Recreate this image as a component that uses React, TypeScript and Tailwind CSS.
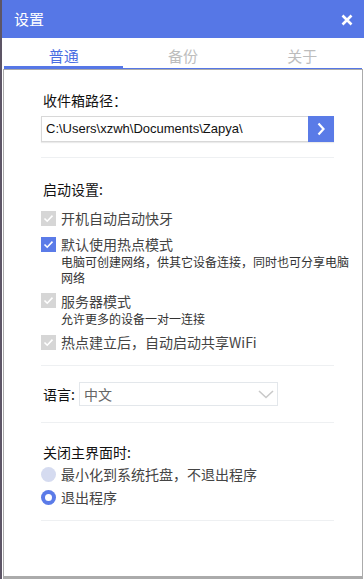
import React from 'react'

const cjk = { fontFamily: '"Noto Sans CJK SC", "Noto Sans", sans-serif' }

function Check({ on, disabled }: { on?: boolean; disabled?: boolean }) {
  return (
    <span
      className={`flex h-[15px] w-[15px] shrink-0 items-center justify-center ${
        disabled ? 'bg-[#d6d6d6]' : on ? 'bg-[#5b7be8]' : 'bg-white border border-gray-300'
      }`}
    >
      <svg width="15" height="15" viewBox="0 0 15 15">
        <polyline points="3.5,7.5 6.2,10.2 11.5,4.6" fill="none" stroke="#fff" strokeWidth="1.6" />
      </svg>
    </span>
  )
}

function Radio({ on }: { on?: boolean }) {
  return on ? (
    <span className="flex h-[15px] w-[15px] shrink-0 items-center justify-center rounded-full bg-[#5b7be8]">
      <span className="h-[7px] w-[7px] rounded-full bg-white" />
    </span>
  ) : (
    <span className="h-[15px] w-[15px] shrink-0 rounded-full bg-[#d5dbf0]" />
  )
}

const Sep = () => <div className="h-px bg-[#eef0f2]" />

export default function App() {
  const tabs = ['普通', '备份', '关于']

  return (
    <div className="flex h-[579px] w-[364px] flex-col bg-white border-l-2 border-[#5d5566]" style={cjk}>
      {/* title bar */}
      <div className="flex h-[38px] shrink-0 items-center justify-between bg-[#5677e6] pl-[12px] pr-[11px]">
        <span className="text-[15px] leading-[20px] text-white">设置</span>
        <svg width="12" height="12" viewBox="0 0 12 12" className="mt-[2px]">
          <path d="M1.5 1.5 L10.5 10.5 M10.5 1.5 L1.5 10.5" stroke="#fff" strokeWidth="2.6" />
        </svg>
      </div>

      {/* tabs */}
      <div className="mx-[2px] flex h-[31px] shrink-0">
        {tabs.map((t, i) => (
          <div key={t} className="flex flex-1 flex-col">
            <div
              className={`flex-1 pt-[8px] text-center text-[15px] leading-[20px] ${
                i === 0 ? 'text-[#4a6ee2]' : 'text-[#bdbdbd]'
              }`}
            >
              {t}
            </div>
            <div className={i === 0 ? 'h-[4px] bg-[#5677e6]' : 'h-px bg-[#5677e6]'} />
          </div>
        ))}
      </div>

      {/* content */}
      <div className="mx-[1px] flex-1 border border-b-[3px] border-[#ababab] pl-[37px] pr-[28px] pt-[20px]">
        <div className="ml-[2px] text-[14px] leading-[20px] text-[#111]">收件箱路径：</div>
        <div className="mt-[6px] flex h-[26px] border border-[#d8d8d8] shadow-[0_1px_1px_rgba(0,0,0,0.08)]">
          <div
            className="flex flex-1 items-center pl-[4px] text-[13px] text-[#111]"
            style={{ fontFamily: '"Liberation Sans", Arial, sans-serif' }}
          >
            C:\Users\xzwh\Documents\Zapya\
          </div>
          <div className="-my-px -mr-px flex w-[26px] items-center justify-center bg-[#5a7be7]">
            <svg width="10" height="14" viewBox="0 0 10 14">
              <polyline points="2.5,1.5 7.5,7 2.5,12.5" fill="none" stroke="#fff" strokeWidth="2.2" />
            </svg>
          </div>
        </div>
        <div className="mt-[15px]">
          <Sep />
        </div>

        <div className="ml-[2px] mt-[21px] text-[14px] leading-[20px] text-[#111]">启动设置:</div>
        <div className="mt-[9px] flex flex-col gap-[5px]">
          <div className="flex items-center gap-[5px] text-[14px] leading-[20px] text-[#444]">
            <Check disabled />
            <span>开机自动启动快牙</span>
          </div>
          <div className="mt-px flex items-start gap-[5px]">
            <div className="mt-[3px]">
              <Check on />
            </div>
            <div>
              <div className="text-[14px] leading-[20px] text-[#444]">默认使用热点模式</div>
              <div className="-mr-[20px] whitespace-nowrap text-[12px] leading-[16px] text-[#333]">
                电脑可创建网络，供其它设备连接，同时也可分享电脑
                <br />
                网络
              </div>
            </div>
          </div>
          <div className="flex items-start gap-[5px]">
            <div className="mt-[2px]">
              <Check disabled />
            </div>
            <div>
              <div className="text-[14px] leading-[20px] text-[#444]">服务器模式</div>
              <div className="text-[12px] leading-[16px] text-[#333]">允许更多的设备一对一连接</div>
            </div>
          </div>
          <div className="flex items-center gap-[5px] text-[14px] leading-[20px] text-[#444]">
            <Check disabled />
            <span>热点建立后，自动启动共享WiFi</span>
          </div>
        </div>
        <div className="mt-[13px]">
          <Sep />
        </div>

        <div className="mt-[16px] flex items-center">
          <span className="ml-[2px] w-[36px] text-[14px] leading-[20px] text-[#111]">语言:</span>
          <div className="flex h-[24px] w-[199px] items-center justify-between border border-[#e3e7eb] pl-[4px] pr-[3px]">
            <span className="text-[14px] text-[#666]">中文</span>
            <svg width="16" height="9" viewBox="0 0 16 9">
              <polyline points="1,1 8,7.5 15,1" fill="none" stroke="#c9c9c9" strokeWidth="1.6" />
            </svg>
          </div>
        </div>
        <div className="mt-[16px]">
          <Sep />
        </div>

        <div className="ml-[2px] mt-[19px] text-[14px] leading-[20px] text-[#111]">关闭主界面时:</div>
        <div className="mt-[2px] flex flex-col gap-[3px]">
          <div className="flex items-center gap-[5px] text-[14px] leading-[20px] text-[#444]">
            <Radio />
            <span>最小化到系统托盘，不退出程序</span>
          </div>
          <div className="flex items-center gap-[5px] text-[14px] leading-[20px] text-[#444]">
            <Radio on />
            <span>退出程序</span>
          </div>
        </div>
        <div className="mt-[13px]">
          <Sep />
        </div>
      </div>
    </div>
  )
}
